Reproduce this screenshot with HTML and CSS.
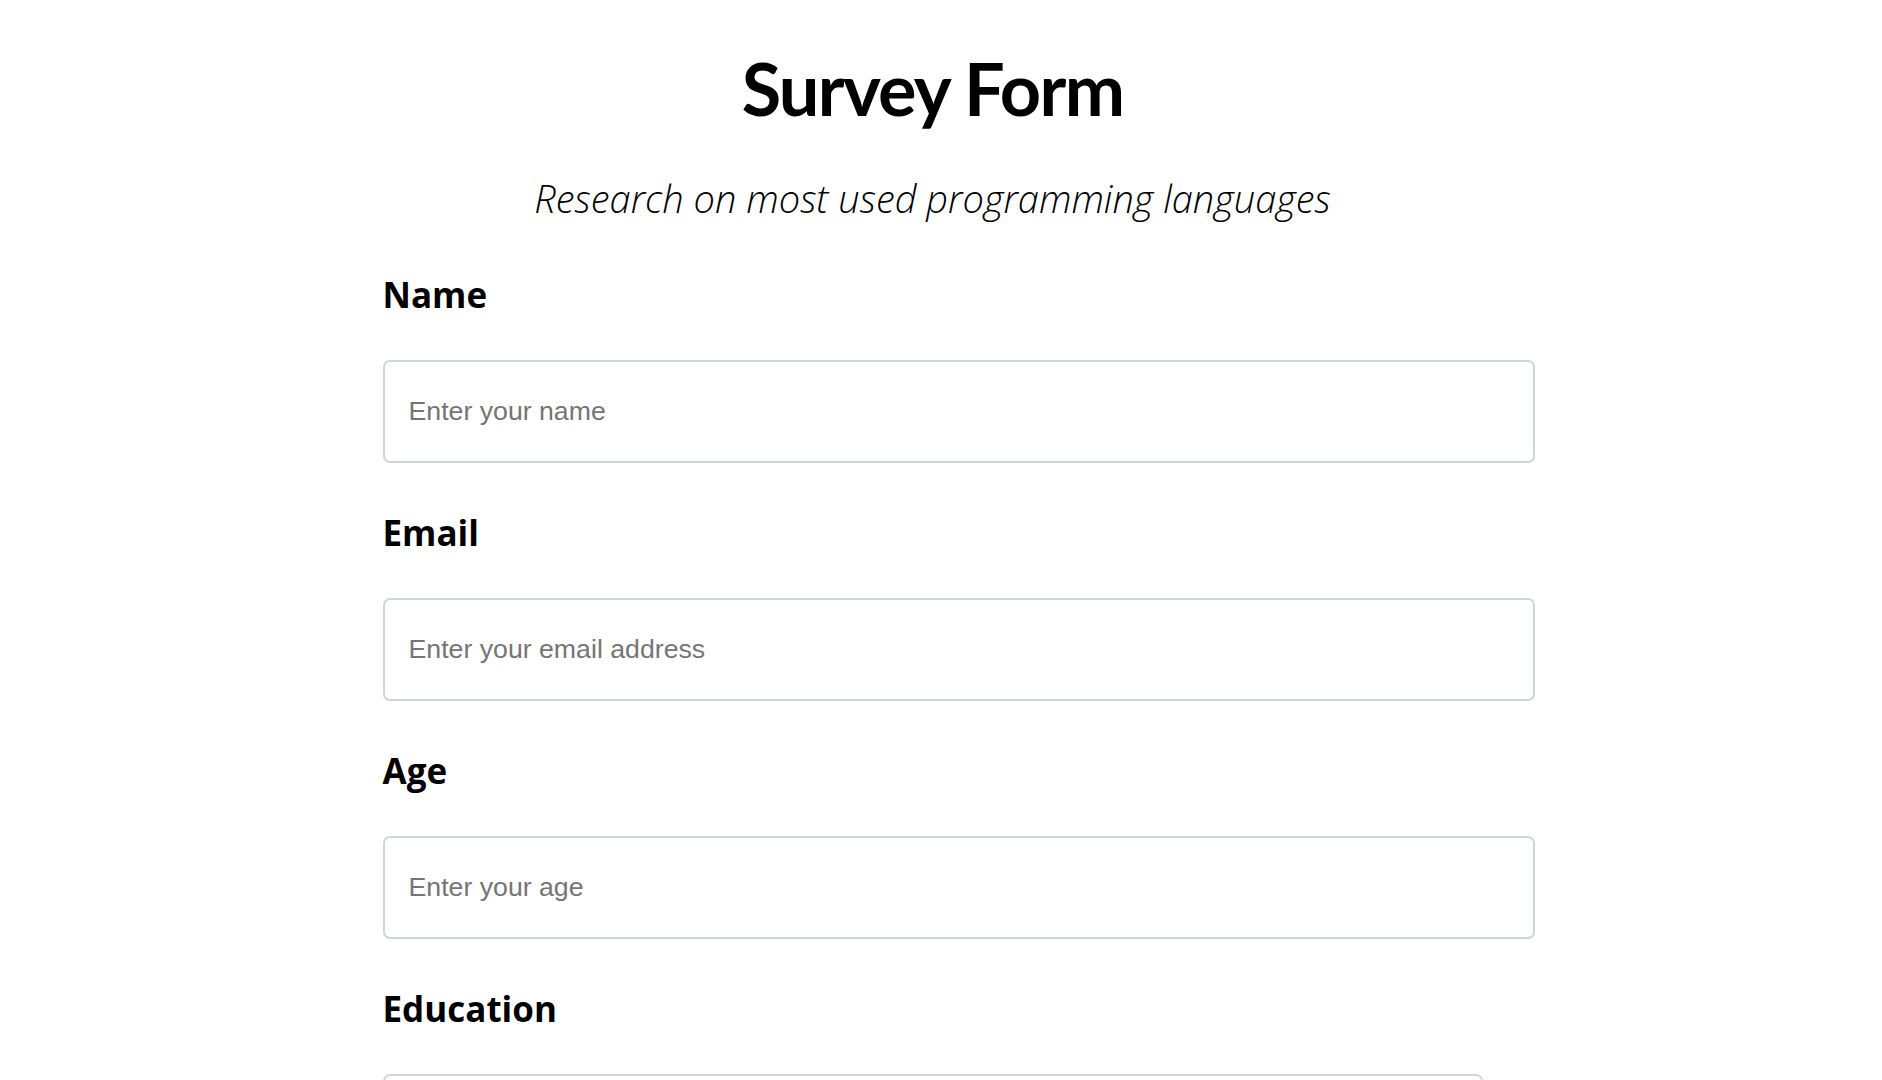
FILE: index.html
```html
<!DOCTYPE html>
<html lang="en">
<head>
<meta charset="utf-8">
<title>Survey Form</title>
<link rel="stylesheet" href="styles.css">
</head>
<body>
<main class="page">
  <header class="header">
    <h1 id="title" class="title">Survey Form</h1>
    <p id="description" class="description">Research on most used programming languages</p>
  </header>
  <form id="survey-form" class="survey">
    <div class="field">
      <label class="label" for="name">Name</label>
      <input class="input" id="name" type="text" placeholder="Enter your name">
    </div>
    <div class="field">
      <label class="label" for="email">Email</label>
      <input class="input" id="email" type="email" placeholder="Enter your email address">
    </div>
    <div class="field">
      <label class="label" for="number">Age</label>
      <input class="input" id="number" type="number" placeholder="Enter your age">
    </div>
    <div class="field">
      <label class="label" for="dropdown">Education</label>
      <select class="select" id="dropdown">
        <option>Select your education level</option>
        <option>High School</option>
        <option>Bachelor's Degree</option>
        <option>Master's Degree</option>
        <option>PhD</option>
      </select>
    </div>
    <div class="field">
      <label class="label" for="comments">Comments</label>
      <textarea class="input textarea" id="comments" placeholder="Enter your comments"></textarea>
    </div>
    <button class="submit" type="submit" id="submit">Submit</button>
  </form>
</main>
</body>
</html>
```

FILE: styles.css
```css
* { box-sizing: content-box; }
body {
  margin: 0;
  padding-right: 17px;
  font-family: "Open Sans", "Noto Sans", sans-serif;
  color: #000;
  background: #fff;
}
.page {
  width: 1100px;
  margin: 0 auto;
  padding-bottom: 80px;
}
.header {
  padding-top: 45px;
  text-align: center;
}
.title {
  margin: 0;
  font-family: Lato, "Open Sans", sans-serif;
  font-size: 72px;
  line-height: 86px;
  font-weight: 700;
  letter-spacing: -1.7px;
}
.description {
  margin: 44px 0 0;
  font-size: 38px;
  line-height: 46px;
  font-weight: 300;
  font-style: italic;
}
.survey {
  display: flex;
  flex-direction: column;
  padding-top: 52px;
}
.field {
  display: flex;
  flex-direction: column;
  gap: 44px;
  margin-bottom: 48px;
}
.label {
  font-size: 35px;
  line-height: 43px;
  font-weight: 700;
}
.input {
  width: 1100px;
  padding: 34px 24px;
  border: 2px solid #d0d5dc;
  border-radius: 7px;
  font-family: "Liberation Sans", Arial, sans-serif;
  font-size: 26.7px;
  line-height: 31px;
  color: #000;
  outline: none;
}
.input::placeholder { color: #757575; }
.select {
  box-sizing: border-box;
  width: 100%;
  height: 103px;
  padding: 0 24px;
  border: 2px solid #d0d5dc;
  border-radius: 7px;
  font-family: "Liberation Sans", Arial, sans-serif;
  font-size: 27px;
  background: #fff;
}
.textarea { height: 200px; resize: vertical; }
.submit {
  align-self: flex-start;
  padding: 20px 40px;
  font-size: 27px;
}
```
